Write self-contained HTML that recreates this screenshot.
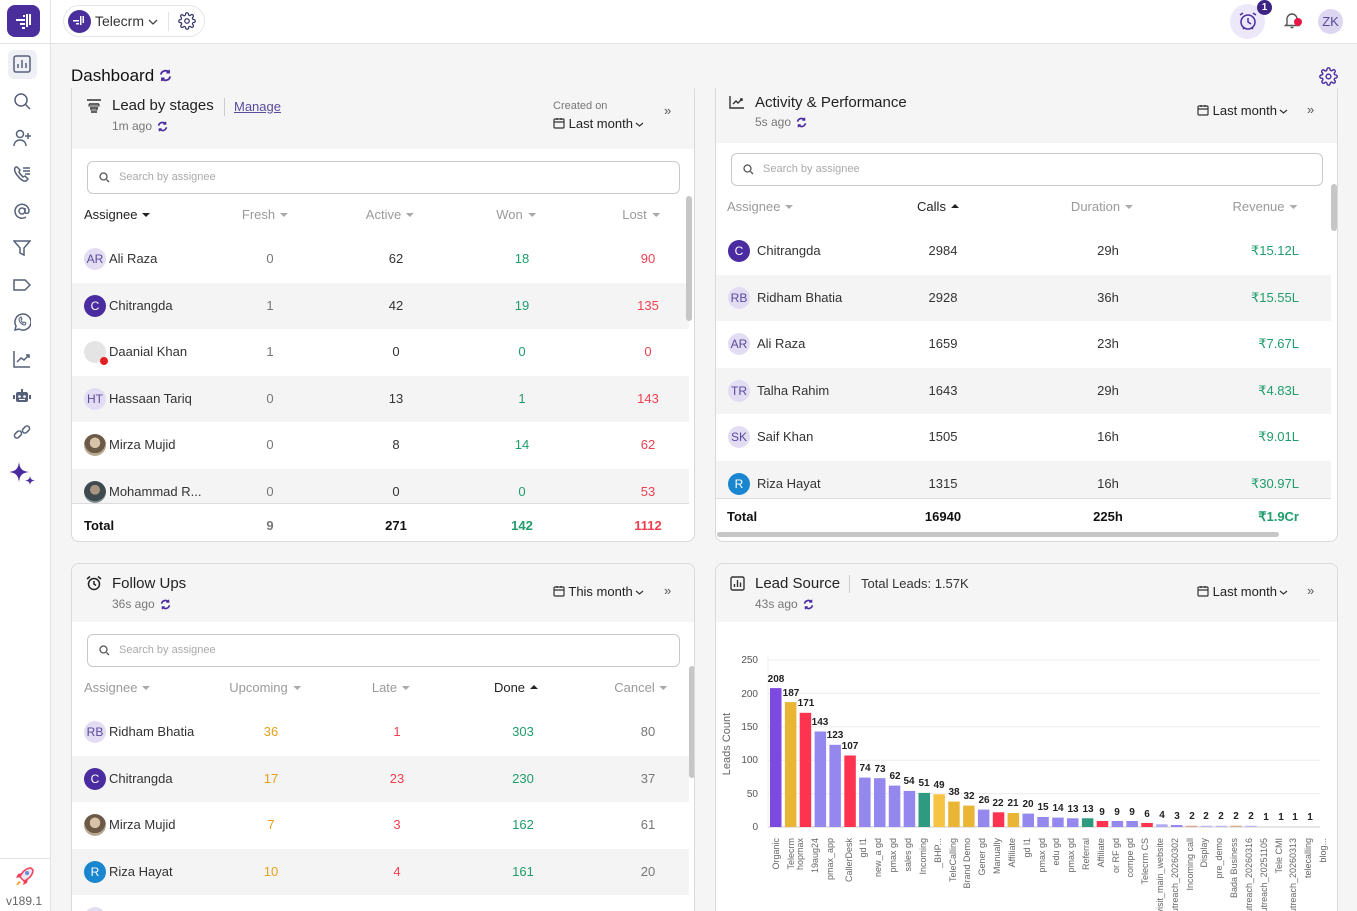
<!DOCTYPE html>
<html><head><meta charset="utf-8">
<style>
*{box-sizing:border-box;margin:0;padding:0}
html,body{width:1357px;height:911px;overflow:hidden}
body{background:#f5f5f5;font-family:"Liberation Sans",Arial,sans-serif;color:#222;position:relative}
.abs{position:absolute}
.side{position:absolute;left:0;top:0;width:51px;height:911px;background:#fff;border-right:1px solid #e3e3e3}
.top{position:absolute;left:51px;top:0;right:0;height:44px;background:#fff;border-bottom:1px solid #e3e3e3}
.ic{position:absolute;left:13px;width:18px;height:18px}
.card{position:absolute;background:#fff;border:1px solid #d9d9d9;border-radius:8px;overflow:hidden}
.hd{position:absolute;left:0;right:0;top:0;background:#f5f5f5}
.search{position:absolute;height:33px;border:1px solid #c9c9c9;border-radius:6px;background:#fff;font-size:11px;color:#aaa;padding-left:31px;line-height:31px}
.search svg{position:absolute;left:11px;top:10px}
.th{position:absolute;font-size:13px;color:#9a9a9a;transform:translateX(-50%);white-space:nowrap}
.th.l{transform:none}
.car{display:inline-block;width:0;height:0;border-left:4px solid transparent;border-right:4px solid transparent;border-top:4px solid #aaa;vertical-align:middle;margin-left:5px;margin-top:-2px}
.up{display:inline-block;width:0;height:0;border-left:4px solid transparent;border-right:4px solid transparent;border-bottom:4px solid #222;vertical-align:middle;margin-left:5px;margin-top:-3px}
.row{position:absolute;left:0;height:46.5px;font-size:13px}
.row.g{background:#f4f4f4}
.row span{position:absolute;top:0;line-height:46.5px;white-space:nowrap}
.c{transform:translateX(-50%)}
.av{position:absolute;top:12px;width:22px;height:22px;border-radius:50%;font-size:12px;text-align:center;line-height:22px}
.av.lt{background:#e3ddf3;color:#5a4a9c}
.av.dk{background:#4b2ca0;color:#fff}
.av.bl{background:#1a86d0;color:#fff}
.av.ph{background:radial-gradient(circle at 50% 40%,#d9c3a8 0 30%,#6b5a48 31% 60%,#b9a890 61%)}
.av.ph2{background:radial-gradient(circle at 50% 40%,#a89480 0 28%,#3f4a4f 29% 65%,#7d8a8c 66%)}
.gr{color:#777}.dkn{color:#333}.gn{color:#1f9d6a}.rd{color:#f0404f}.yl{color:#e3a21a}
.nm{color:#333}
.t1{position:absolute;font-size:15px;color:#222}
.t2{position:absolute;font-size:12px;color:#777}
.ref{display:inline-block;vertical-align:middle;margin-left:5px}
.dd{position:absolute;font-size:13px;color:#222;white-space:nowrap}
</style></head><body>

<div class="side">
  <div class="abs" style="left:7px;top:5px;width:33px;height:32px;background:#4a2e9c;border-radius:8px">
    <svg width="33" height="32" viewBox="0 0 33 32"><g fill="#fff"><rect x="9" y="14" width="9" height="2"/><rect x="13" y="18" width="5" height="2"/><rect x="15" y="22" width="3" height="2"/><rect x="19" y="9" width="2" height="13"/><rect x="22" y="9" width="2" height="11"/><rect x="16" y="10" width="2" height="2"/></g></svg>
  </div>
  <div class="abs" style="left:0;top:43px;width:51px;height:1px;background:#e3e3e3"></div>
  <div class="abs" style="left:8px;top:50px;width:29px;height:29px;background:#eef0f5;border-radius:6px"></div>
  <svg class="ic" style="top:55px" viewBox="0 0 18 18" fill="none" stroke="#55617a" stroke-width="1.5"><rect x="1" y="1" width="16" height="16" rx="2"/><path d="M5 13V9M9 13V5M13 13V8"/></svg>
  <svg class="ic" style="top:92px" viewBox="0 0 18 18" fill="none" stroke="#55617a" stroke-width="1.5"><circle cx="8" cy="8" r="6"/><path d="M12.5 12.5L17 17"/></svg>
  <svg class="ic" style="top:129px" viewBox="0 0 18 18" fill="none" stroke="#55617a" stroke-width="1.5"><circle cx="7" cy="5" r="3.5"/><path d="M1 17c0-4 3-6 6-6s6 2 6 6M15 4v6M12 7h6"/></svg>
  <svg class="ic" style="top:165px" viewBox="0 0 18 18" fill="none" stroke="#55617a" stroke-width="1.5"><path d="M3 2c-2 1-2 4 1 8s6 7 9 6l2-2-3-3-2 1c-1-1-3-3-4-5l1-2-3-3zM10 3h7M10 6h7M12 9h5"/></svg>
  <svg class="ic" style="top:202px" viewBox="0 0 18 18" fill="none" stroke="#55617a" stroke-width="1.5"><circle cx="9" cy="9" r="3"/><path d="M12 6v4c0 2 4 2 4-1a7 7 0 1 0-3 6"/></svg>
  <svg class="ic" style="top:239px" viewBox="0 0 18 18" fill="none" stroke="#55617a" stroke-width="1.5"><path d="M1 2h16l-6 7v7l-4-2V9z"/></svg>
  <svg class="ic" style="top:276px" viewBox="0 0 18 18" fill="none" stroke="#55617a" stroke-width="1.5"><path d="M1 4h11l5 5-5 5H1z"/></svg>
  <svg class="ic" style="top:313px" viewBox="0 0 18 18" fill="none" stroke="#55617a" stroke-width="1.5"><path d="M2 17l1-4a8 8 0 1 1 3 3z"/><path d="M6 6c0 3 3 6 6 6l1-2-2-1-1 1c-1-1-2-2-2-3l1-1-1-2z" stroke-width="1"/></svg>
  <svg class="ic" style="top:350px" viewBox="0 0 18 18" fill="none" stroke="#55617a" stroke-width="1.5"><path d="M1 1v16h16M4 12l4-4 3 2 5-5M13 5h3v3"/></svg>
  <svg class="ic" style="top:387px" viewBox="0 0 18 18" fill="#55617a"><rect x="3" y="5" width="12" height="10" rx="2"/><rect x="8" y="2" width="2" height="3"/><rect x="0" y="8" width="2" height="4"/><rect x="16" y="8" width="2" height="4"/><circle cx="6.5" cy="9.5" r="1.3" fill="#fff"/><circle cx="11.5" cy="9.5" r="1.3" fill="#fff"/><rect x="6" y="12" width="6" height="1" fill="#fff"/></svg>
  <svg class="ic" style="top:423px" viewBox="0 0 18 18" fill="none" stroke="#55617a" stroke-width="1.5"><rect x="1" y="9" width="8" height="5" rx="2.5" transform="rotate(-45 5 11.5)"/><rect x="9" y="4" width="8" height="5" rx="2.5" transform="rotate(-45 13 6.5)"/></svg>
  <svg class="abs" style="left:9px;top:462px" width="28" height="26" viewBox="0 0 28 26" fill="#4b2ca0"><path d="M10 0C11 7 13 9 20 10C13 11 11 13 10 20C9 13 7 11 0 10C7 9 9 7 10 0Z"/><path d="M21 14C21.5 17 22.5 18 26 18.5C22.5 19 21.5 20 21 23C20.5 20 19.5 19 16 18.5C19.5 18 20.5 17 21 14Z"/></svg>
  <div class="abs" style="left:0;top:858px;width:51px;height:1px;background:#e3e3e3"></div>
  <svg class="abs" style="left:13px;top:866px" width="22" height="22" viewBox="0 0 22 22"><path d="M18 2c-5 0-9 4-11 9l4 4c5-2 9-6 9-11z" fill="#e8e4f0" stroke="#f0405a" stroke-width="1.5"/><circle cx="14" cy="7" r="2" fill="#6b8ae0"/><path d="M7 11l-4 1 2-4 4-1zM11 15l-1 4 4-2 1-4z" fill="#f0405a"/><path d="M6 15l-3 4 2 0 3-3z" fill="#ffa030"/></svg>
  <div class="abs" style="left:6px;top:894px;font-size:12px;color:#666">v189.1</div>
</div>

<div class="top">
  <div class="abs" style="left:12px;top:5px;width:142px;height:32px;border:1px solid #e6e6e6;border-radius:16px;background:#fff">
    <div class="abs" style="left:4px;top:4px;width:23px;height:23px;border-radius:50%;background:#4a2e9c"></div>
    <svg class="abs" style="left:4px;top:4px" width="23" height="23" viewBox="0 0 23 23" fill="#fff"><rect x="5" y="10" width="6" height="1.5"/><rect x="8" y="13" width="3" height="1.5"/><rect x="12" y="6" width="1.5" height="9"/><rect x="14.5" y="6" width="1.5" height="7"/></svg>
    <div class="abs" style="left:31px;top:7px;font-size:14px;color:#333">Telecrm</div>
    <svg class="abs" style="left:84px;top:12px" width="10" height="8" viewBox="0 0 10 8" fill="none" stroke="#444" stroke-width="1.3"><path d="M1 2l4 4 4-4"/></svg>
    <div class="abs" style="left:104px;top:6px;width:1px;height:19px;background:#e3e3e3"></div>
    <svg class="abs" style="left:114px;top:6px" width="18" height="18" viewBox="0 0 24 24" fill="none" stroke="#3a3a6a" stroke-width="1.7"><circle cx="12" cy="12" r="3"/><path d="M19.4 15a1.6 1.6 0 0 0 .3 1.8l.1.1a2 2 0 1 1-2.8 2.8l-.1-.1a1.6 1.6 0 0 0-1.8-.3 1.6 1.6 0 0 0-1 1.5V21a2 2 0 1 1-4 0v-.1a1.6 1.6 0 0 0-1-1.5 1.6 1.6 0 0 0-1.8.3l-.1.1a2 2 0 1 1-2.8-2.8l.1-.1a1.6 1.6 0 0 0 .3-1.8 1.6 1.6 0 0 0-1.5-1H3a2 2 0 1 1 0-4h.1a1.6 1.6 0 0 0 1.5-1 1.6 1.6 0 0 0-.3-1.8l-.1-.1a2 2 0 1 1 2.8-2.8l.1.1a1.6 1.6 0 0 0 1.8.3H9a1.6 1.6 0 0 0 1-1.5V3a2 2 0 1 1 4 0v.1a1.6 1.6 0 0 0 1 1.5 1.6 1.6 0 0 0 1.8-.3l.1-.1a2 2 0 1 1 2.8 2.8l-.1.1a1.6 1.6 0 0 0-.3 1.8V9a1.6 1.6 0 0 0 1.5 1H21a2 2 0 1 1 0 4h-.1a1.6 1.6 0 0 0-1.5 1z"/></svg>
  </div>
  <div class="abs" style="left:1179px;top:4px;width:35px;height:35px;border-radius:50%;background:#ece8fa"></div>
  <svg class="abs" style="left:1187px;top:11px" width="20" height="20" viewBox="0 0 20 20" fill="none" stroke="#4b2ca0" stroke-width="1.5"><circle cx="10" cy="11" r="7"/><path d="M10 7v4l3 2M2 4l3-2M18 4l-3-2M5 18l1-1M15 18l-1-1"/></svg>
  <div class="abs" style="left:1206px;top:0;width:15px;height:15px;border-radius:50%;background:#3c2384;color:#fff;font-size:10px;font-weight:bold;text-align:center;line-height:15px">1</div>
  <svg class="abs" style="left:1232px;top:11px" width="18" height="18" viewBox="0 0 18 18" fill="none" stroke="#555" stroke-width="1.4"><path d="M4 13V8a5 5 0 0 1 10 0v5l1.5 1.5h-13zM7.5 16.5h3"/></svg>
  <div class="abs" style="left:1243px;top:18px;width:8px;height:8px;border-radius:50%;background:#e8174a"></div>
  <div class="abs" style="left:1267px;top:9px;width:25px;height:25px;border-radius:50%;background:#ddd6f0;color:#5a4a9c;font-size:13px;text-align:center;line-height:25px">ZK</div>
</div>

<div class="abs" style="left:71px;top:66px;font-size:17px;color:#111">Dashboard<svg class="ref" style="margin-top:-3px" width="13" height="13" viewBox="0 0 14 14" fill="none" stroke="#4b2ca0" stroke-width="2"><path d="M2 6a5 5 0 0 1 9-2M12 8a5 5 0 0 1-9 2"/><path d="M11 1v3H8M3 13v-3h3" stroke-width="1.6"/></svg></div>
<svg class="abs" style="left:1319px;top:67px" width="19" height="19" viewBox="0 0 24 24" fill="none" stroke="#4b2ca0" stroke-width="1.8"><circle cx="12" cy="12" r="3"/><path d="M19.4 15a1.6 1.6 0 0 0 .3 1.8l.1.1a2 2 0 1 1-2.8 2.8l-.1-.1a1.6 1.6 0 0 0-1.8-.3 1.6 1.6 0 0 0-1 1.5V21a2 2 0 1 1-4 0v-.1a1.6 1.6 0 0 0-1-1.5 1.6 1.6 0 0 0-1.8.3l-.1.1a2 2 0 1 1-2.8-2.8l.1-.1a1.6 1.6 0 0 0 .3-1.8 1.6 1.6 0 0 0-1.5-1H3a2 2 0 1 1 0-4h.1a1.6 1.6 0 0 0 1.5-1 1.6 1.6 0 0 0-.3-1.8l-.1-.1a2 2 0 1 1 2.8-2.8l.1.1a1.6 1.6 0 0 0 1.8.3H9a1.6 1.6 0 0 0 1-1.5V3a2 2 0 1 1 4 0v.1a1.6 1.6 0 0 0 1 1.5 1.6 1.6 0 0 0 1.8-.3l.1-.1a2 2 0 1 1 2.8 2.8l-.1.1a1.6 1.6 0 0 0-.3 1.8V9a1.6 1.6 0 0 0 1.5 1H21a2 2 0 1 1 0 4h-.1a1.6 1.6 0 0 0-1.5 1z"/></svg>

<div class="abs" style="left:0;top:88px;width:1357px;height:460px;overflow:hidden">

<div class="card" style="left:71px;top:-6px;width:624px;height:460px">
  <div class="hd" style="height:66px"></div>
  <svg class="abs" style="left:14px;top:15px" width="16" height="16" viewBox="0 0 16 16" fill="none" stroke="#333" stroke-width="1.4"><path d="M1 2h14M3 6h10M4 10h8M5 14h6"/><path d="M3 6v2h10V6M5 10v2h6v-2" stroke-width="1"/></svg>
  <div class="t1" style="left:40px;top:14px">Lead by stages</div>
  <div class="abs" style="left:152px;top:15px;width:1px;height:18px;background:#ccc"></div>
  <div class="abs" style="left:162px;top:16px;font-size:13px;color:#5a4a9c;text-decoration:underline">Manage</div>
  <div class="t2" style="left:40px;top:36px">1m ago<svg class="ref" width="11" height="11" viewBox="0 0 14 14" fill="none" stroke="#4b2ca0" stroke-width="2"><path d="M2 6a5 5 0 0 1 9-2M12 8a5 5 0 0 1-9 2"/><path d="M11 1v3H8M3 13v-3h3" stroke-width="1.6"/></svg></div>
  <div class="abs" style="left:481px;top:17px;font-size:11px;color:#777">Created on</div>
  <div class="dd" style="left:481px;top:33px"><svg width="12" height="12" viewBox="0 0 12 12" fill="none" stroke="#333" stroke-width="1.2" style="vertical-align:-1px"><rect x="1" y="2" width="10" height="9" rx="1"/><path d="M1 5h10M4 1v2M8 1v2"/></svg> Last month<svg width="9" height="7" viewBox="0 0 9 7" fill="none" stroke="#333" stroke-width="1.2" style="margin-left:2px"><path d="M1 2l3.5 3 3.5-3"/></svg></div>
  <div class="abs" style="left:592px;top:20px;font-size:13px;color:#555">»</div>
  <div class="search" style="left:15px;top:78px;width:593px"><svg width="11" height="11" viewBox="0 0 11 11" fill="none" stroke="#555" stroke-width="1.3"><circle cx="4.5" cy="4.5" r="3.5"/><path d="M7.5 7.5L10 10"/></svg>Search by assignee</div>
  <div class="th l" style="left:12px;top:124px;color:#222">Assignee<span class="car" style="border-top-color:#222"></span></div>
  <div class="th" style="left:193px;top:124px">Fresh<span class="car"></span></div>
  <div class="th" style="left:318px;top:124px">Active<span class="car"></span></div>
  <div class="th" style="left:444px;top:124px">Won<span class="car"></span></div>
  <div class="th" style="left:569px;top:124px">Lost<span class="car"></span></div>
  <div class="abs" style="left:0;top:153px;width:617px;height:267px;overflow:hidden">
    <div class="row" style="top:0;width:617px"><div class="av lt" style="left:12px">AR</div><span class="nm" style="left:37px">Ali Raza</span><span class="c gr" style="left:198px">0</span><span class="c dkn" style="left:324px">62</span><span class="c gn" style="left:450px">18</span><span class="c rd" style="left:576px">90</span></div>
    <div class="row g" style="top:46.5px;width:617px"><div class="av dk" style="left:12px">C</div><span class="nm" style="left:37px">Chitrangda</span><span class="c gr" style="left:198px">1</span><span class="c dkn" style="left:324px">42</span><span class="c gn" style="left:450px">19</span><span class="c rd" style="left:576px">135</span></div>
    <div class="row" style="top:93px;width:617px"><div class="av" style="left:12px;background:#e4e4e4"></div><div class="abs" style="left:28px;top:28px;width:8px;height:8px;border-radius:50%;background:#e32020"></div><span class="nm" style="left:37px">Daanial Khan</span><span class="c gr" style="left:198px">1</span><span class="c dkn" style="left:324px">0</span><span class="c gn" style="left:450px">0</span><span class="c rd" style="left:576px">0</span></div>
    <div class="row g" style="top:139.5px;width:617px"><div class="av lt" style="left:12px">HT</div><span class="nm" style="left:37px">Hassaan Tariq</span><span class="c gr" style="left:198px">0</span><span class="c dkn" style="left:324px">13</span><span class="c gn" style="left:450px">1</span><span class="c rd" style="left:576px">143</span></div>
    <div class="row" style="top:186px;width:617px"><div class="av ph" style="left:12px"></div><span class="nm" style="left:37px">Mirza Mujid</span><span class="c gr" style="left:198px">0</span><span class="c dkn" style="left:324px">8</span><span class="c gn" style="left:450px">14</span><span class="c rd" style="left:576px">62</span></div>
    <div class="row g" style="top:232.5px;width:617px"><div class="av ph2" style="left:12px"></div><span class="nm" style="left:37px">Mohammad R...</span><span class="c gr" style="left:198px">0</span><span class="c dkn" style="left:324px">0</span><span class="c gn" style="left:450px">0</span><span class="c rd" style="left:576px">53</span></div>
  </div>
  <div class="abs" style="left:614px;top:113px;width:6px;height:125px;background:#c6c6c6;border-radius:3px"></div>
  <div class="abs" style="left:0;top:420px;width:617px;height:1px;background:#ddd"></div>
  <div class="row" style="top:420px;width:617px;font-weight:bold"><span style="left:12px;color:#111">Total</span><span class="c gr" style="left:198px">9</span><span class="c" style="left:324px;color:#111">271</span><span class="c gn" style="left:450px">142</span><span class="c rd" style="left:576px">1112</span></div>
</div>

<div class="card" style="left:715px;top:-6px;width:623px;height:460px">
  <div class="hd" style="height:60px"></div>
  <svg class="abs" style="left:13px;top:12px" width="16" height="14" viewBox="0 0 16 14" fill="none" stroke="#333" stroke-width="1.4"><path d="M1 1v12h14M4 9l3-3 2 2 4-4M11 4h2v2"/></svg>
  <div class="t1" style="left:39px;top:11px">Activity &amp; Performance</div>
  <div class="t2" style="left:39px;top:32px">5s ago<svg class="ref" width="11" height="11" viewBox="0 0 14 14" fill="none" stroke="#4b2ca0" stroke-width="2"><path d="M2 6a5 5 0 0 1 9-2M12 8a5 5 0 0 1-9 2"/><path d="M11 1v3H8M3 13v-3h3" stroke-width="1.6"/></svg></div>
  <div class="dd" style="left:481px;top:20px"><svg width="12" height="12" viewBox="0 0 12 12" fill="none" stroke="#333" stroke-width="1.2" style="vertical-align:-1px"><rect x="1" y="2" width="10" height="9" rx="1"/><path d="M1 5h10M4 1v2M8 1v2"/></svg> Last month<svg width="9" height="7" viewBox="0 0 9 7" fill="none" stroke="#333" stroke-width="1.2" style="margin-left:2px"><path d="M1 2l3.5 3 3.5-3"/></svg></div>
  <div class="abs" style="left:591px;top:19px;font-size:13px;color:#555">»</div>
  <div class="search" style="left:15px;top:70px;width:592px"><svg width="11" height="11" viewBox="0 0 11 11" fill="none" stroke="#555" stroke-width="1.3"><circle cx="4.5" cy="4.5" r="3.5"/><path d="M7.5 7.5L10 10"/></svg>Search by assignee</div>
  <div class="th l" style="left:11px;top:116px">Assignee<span class="car"></span></div>
  <div class="th" style="left:222px;top:116px;color:#222">Calls<span class="up"></span></div>
  <div class="th" style="left:386px;top:116px">Duration<span class="car"></span></div>
  <div class="th" style="left:549px;top:116px">Revenue<span class="car"></span></div>
  <div class="abs" style="left:0;top:145px;width:615px;height:270px;overflow:hidden">
    <div class="row" style="top:0;width:615px"><div class="av dk" style="left:12px">C</div><span class="nm" style="left:41px">Chitrangda</span><span class="c dkn" style="left:227px">2984</span><span class="c dkn" style="left:392px">29h</span><span class="gn" style="right:32px">₹15.12L</span></div>
    <div class="row g" style="top:46.5px;width:615px"><div class="av lt" style="left:12px">RB</div><span class="nm" style="left:41px">Ridham Bhatia</span><span class="c dkn" style="left:227px">2928</span><span class="c dkn" style="left:392px">36h</span><span class="gn" style="right:32px">₹15.55L</span></div>
    <div class="row" style="top:93px;width:615px"><div class="av lt" style="left:12px">AR</div><span class="nm" style="left:41px">Ali Raza</span><span class="c dkn" style="left:227px">1659</span><span class="c dkn" style="left:392px">23h</span><span class="gn" style="right:32px">₹7.67L</span></div>
    <div class="row g" style="top:139.5px;width:615px"><div class="av lt" style="left:12px">TR</div><span class="nm" style="left:41px">Talha Rahim</span><span class="c dkn" style="left:227px">1643</span><span class="c dkn" style="left:392px">29h</span><span class="gn" style="right:32px">₹4.83L</span></div>
    <div class="row" style="top:186px;width:615px"><div class="av lt" style="left:12px">SK</div><span class="nm" style="left:41px">Saif Khan</span><span class="c dkn" style="left:227px">1505</span><span class="c dkn" style="left:392px">16h</span><span class="gn" style="right:32px">₹9.01L</span></div>
    <div class="row g" style="top:232.5px;width:615px"><div class="av bl" style="left:12px">R</div><span class="nm" style="left:41px">Riza Hayat</span><span class="c dkn" style="left:227px">1315</span><span class="c dkn" style="left:392px">16h</span><span class="gn" style="right:32px">₹30.97L</span></div>
  </div>
  <div class="abs" style="left:615px;top:101px;width:6px;height:47px;background:#c6c6c6;border-radius:3px"></div>
  <div class="abs" style="left:0;top:415px;width:615px;height:1px;background:#ddd"></div>
  <div class="row" style="top:411px;width:615px;font-weight:bold"><span style="left:11px;color:#111">Total</span><span class="c" style="left:227px;color:#111">16940</span><span class="c" style="left:392px;color:#111">225h</span><span class="gn" style="right:32px">₹1.9Cr</span></div>
  <div class="abs" style="left:1px;top:449px;width:562px;height:5px;background:#c6c6c6;border-radius:3px"></div>
</div>
</div>

<div class="abs" style="left:0;top:563px;width:1357px;height:348px;overflow:hidden">
<div class="card" style="left:71px;top:0;width:624px;height:420px">
  <div class="hd" style="height:58px"></div>
  <svg class="abs" style="left:14px;top:11px" width="16" height="16" viewBox="0 0 16 16" fill="none" stroke="#222" stroke-width="1.5"><circle cx="8" cy="9" r="5.5"/><path d="M8 6v3l2 1.5M1 4l3-2.5M15 4l-3-2.5"/></svg>
  <div class="t1" style="left:40px;top:11px">Follow Ups</div>
  <div class="t2" style="left:40px;top:33px">36s ago<svg class="ref" width="11" height="11" viewBox="0 0 14 14" fill="none" stroke="#4b2ca0" stroke-width="2"><path d="M2 6a5 5 0 0 1 9-2M12 8a5 5 0 0 1-9 2"/><path d="M11 1v3H8M3 13v-3h3" stroke-width="1.6"/></svg></div>
  <div class="dd" style="left:481px;top:20px"><svg width="12" height="12" viewBox="0 0 12 12" fill="none" stroke="#333" stroke-width="1.2" style="vertical-align:-1px"><rect x="1" y="2" width="10" height="9" rx="1"/><path d="M1 5h10M4 1v2M8 1v2"/></svg> This month<svg width="9" height="7" viewBox="0 0 9 7" fill="none" stroke="#333" stroke-width="1.2" style="margin-left:2px"><path d="M1 2l3.5 3 3.5-3"/></svg></div>
  <div class="abs" style="left:592px;top:19px;font-size:13px;color:#555">»</div>
  <div class="search" style="left:15px;top:70px;width:593px"><svg width="11" height="11" viewBox="0 0 11 11" fill="none" stroke="#555" stroke-width="1.3"><circle cx="4.5" cy="4.5" r="3.5"/><path d="M7.5 7.5L10 10"/></svg>Search by assignee</div>
  <div class="th l" style="left:12px;top:116px">Assignee<span class="car"></span></div>
  <div class="th" style="left:193px;top:116px">Upcoming<span class="car"></span></div>
  <div class="th" style="left:319px;top:116px">Late<span class="car"></span></div>
  <div class="th" style="left:444px;top:116px;color:#222">Done<span class="up"></span></div>
  <div class="th" style="left:569px;top:116px">Cancel<span class="car"></span></div>
  <div class="row" style="top:145px;width:617px"><div class="av lt" style="left:12px">RB</div><span class="nm" style="left:37px">Ridham Bhatia</span><span class="c yl" style="left:199px">36</span><span class="c rd" style="left:325px">1</span><span class="c gn" style="left:451px">303</span><span class="c gr" style="left:576px">80</span></div>
  <div class="row g" style="top:191.5px;width:617px"><div class="av dk" style="left:12px">C</div><span class="nm" style="left:37px">Chitrangda</span><span class="c yl" style="left:199px">17</span><span class="c rd" style="left:325px">23</span><span class="c gn" style="left:451px">230</span><span class="c gr" style="left:576px">37</span></div>
  <div class="row" style="top:238px;width:617px"><div class="av ph" style="left:12px"></div><span class="nm" style="left:37px">Mirza Mujid</span><span class="c yl" style="left:199px">7</span><span class="c rd" style="left:325px">3</span><span class="c gn" style="left:451px">162</span><span class="c gr" style="left:576px">61</span></div>
  <div class="row g" style="top:284.5px;width:617px"><div class="av bl" style="left:12px">R</div><span class="nm" style="left:37px">Riza Hayat</span><span class="c yl" style="left:199px">10</span><span class="c rd" style="left:325px">4</span><span class="c gn" style="left:451px">161</span><span class="c gr" style="left:576px">20</span></div>
  <div class="av lt" style="left:12px;top:343px"></div>
  <div class="abs" style="left:617px;top:102px;width:6px;height:112px;background:#c6c6c6;border-radius:3px"></div>
</div>

<div class="card" style="left:715px;top:0;width:623px;height:420px">
  <div class="hd" style="height:58px"></div>
  <svg class="abs" style="left:14px;top:12px" width="15" height="15" viewBox="0 0 15 15" fill="none" stroke="#333" stroke-width="1.4"><rect x="1" y="1" width="13" height="13" rx="1.5"/><path d="M4.5 11V8M7.5 11V4M10.5 11V6.5"/></svg>
  <div class="t1" style="left:39px;top:11px">Lead Source</div>
  <div class="abs" style="left:133px;top:11px;width:1px;height:18px;background:#ccc"></div>
  <div class="abs" style="left:145px;top:12px;font-size:13px;color:#333">Total Leads: 1.57K</div>
  <div class="t2" style="left:39px;top:33px">43s ago<svg class="ref" width="11" height="11" viewBox="0 0 14 14" fill="none" stroke="#4b2ca0" stroke-width="2"><path d="M2 6a5 5 0 0 1 9-2M12 8a5 5 0 0 1-9 2"/><path d="M11 1v3H8M3 13v-3h3" stroke-width="1.6"/></svg></div>
  <div class="dd" style="left:481px;top:20px"><svg width="12" height="12" viewBox="0 0 12 12" fill="none" stroke="#333" stroke-width="1.2" style="vertical-align:-1px"><rect x="1" y="2" width="10" height="9" rx="1"/><path d="M1 5h10M4 1v2M8 1v2"/></svg> Last month<svg width="9" height="7" viewBox="0 0 9 7" fill="none" stroke="#333" stroke-width="1.2" style="margin-left:2px"><path d="M1 2l3.5 3 3.5-3"/></svg></div>
  <div class="abs" style="left:591px;top:19px;font-size:13px;color:#555">»</div>
</div>
</div>

<svg class="abs" style="left:0;top:0" width="1357" height="911" viewBox="0 0 1357 911" font-family="Liberation Sans, Arial, sans-serif">
  <g stroke="#ececec" stroke-width="1">
    <path d="M768 660H1320M768 693.4H1320M768 726.8H1320M768 760.2H1320M768 793.6H1320"/>
  </g>
  <path d="M768 827H1320" stroke="#ccc"/>
  <path d="M768 655V827" stroke="#eee"/>
  <g font-size="10" fill="#555" text-anchor="end">
    <text x="758" y="663">250</text><text x="758" y="697">200</text><text x="758" y="730">150</text><text x="758" y="763">100</text><text x="758" y="797">50</text><text x="758" y="830">0</text>
  </g>
  <text x="730" y="744" font-size="11" fill="#666" text-anchor="middle" transform="rotate(-90 730 744)">Leads Count</text>
  <g>
    <rect x="770" y="688.1" width="11.5" height="138.9" fill="#7c4ae0"/>
    <rect x="784.9" y="702.1" width="11.5" height="124.9" fill="#e8b535"/>
    <rect x="799.7" y="712.8" width="11.5" height="114.2" fill="#fe3350"/>
    <rect x="814.6" y="731.5" width="11.5" height="95.5" fill="#9488ee"/>
    <rect x="829.4" y="744.8" width="11.5" height="82.2" fill="#9488ee"/>
    <rect x="844.3" y="755.5" width="11.5" height="71.5" fill="#fe3350"/>
    <rect x="859.1" y="777.6" width="11.5" height="49.4" fill="#9488ee"/>
    <rect x="874" y="778.2" width="11.5" height="48.8" fill="#9488ee"/>
    <rect x="888.8" y="785.6" width="11.5" height="41.4" fill="#9488ee"/>
    <rect x="903.7" y="790.9" width="11.5" height="36.1" fill="#9488ee"/>
    <rect x="918.5" y="792.9" width="11.5" height="34.1" fill="#2e9a80"/>
    <rect x="933.4" y="794.3" width="11.5" height="32.7" fill="#f6c342"/>
    <rect x="948.2" y="801.6" width="11.5" height="25.4" fill="#e8b535"/>
    <rect x="963.1" y="805.6" width="11.5" height="21.4" fill="#e8b535"/>
    <rect x="977.9" y="809.6" width="11.5" height="17.4" fill="#9488ee"/>
    <rect x="992.8" y="812.3" width="11.5" height="14.7" fill="#fe3350"/>
    <rect x="1007.6" y="813" width="11.5" height="14" fill="#e8b535"/>
    <rect x="1022.5" y="813.6" width="11.5" height="13.4" fill="#9488ee"/>
    <rect x="1037.3" y="817" width="11.5" height="10" fill="#9488ee"/>
    <rect x="1052.2" y="817.6" width="11.5" height="9.4" fill="#9488ee"/>
    <rect x="1067" y="818.3" width="11.5" height="8.7" fill="#9488ee"/>
    <rect x="1081.9" y="818.3" width="11.5" height="8.7" fill="#2e9a80"/>
    <rect x="1096.7" y="821" width="11.5" height="6" fill="#fe3350"/>
    <rect x="1111.6" y="821" width="11.5" height="6" fill="#9488ee"/>
    <rect x="1126.4" y="821" width="11.5" height="6" fill="#9488ee"/>
    <rect x="1141.3" y="823" width="11.5" height="4" fill="#fe3350"/>
    <rect x="1156.1" y="824.3" width="11.5" height="2.7" fill="#b0a8f0"/>
    <rect x="1171" y="825" width="11.5" height="2" fill="#9488ee"/>
    <rect x="1185.8" y="825.7" width="11.5" height="1.3" fill="#d8aa90"/>
    <rect x="1200.7" y="825.7" width="11.5" height="1.3" fill="#c0b8f4"/>
    <rect x="1215.5" y="825.7" width="11.5" height="1.3" fill="#c0b8f4"/>
    <rect x="1230.4" y="825.7" width="11.5" height="1.3" fill="#d8aa90"/>
    <rect x="1245.2" y="825.7" width="11.5" height="1.3" fill="#c0b8f4"/>
  </g>
  <g font-size="10" fill="#222" text-anchor="middle" font-weight="bold">
    <text x="776" y="682">208</text><text x="791" y="696">187</text><text x="806" y="706">171</text><text x="820" y="725">143</text><text x="835" y="738">123</text><text x="850" y="749">107</text><text x="865" y="771">74</text><text x="880" y="772">73</text><text x="895" y="779">62</text><text x="909" y="784">54</text><text x="924" y="786">51</text><text x="939" y="788">49</text><text x="954" y="795">38</text><text x="969" y="799">32</text><text x="984" y="803">26</text><text x="998" y="806">22</text><text x="1013" y="806">21</text><text x="1028" y="807">20</text><text x="1043" y="810">15</text><text x="1058" y="811">14</text><text x="1073" y="812">13</text><text x="1088" y="812">13</text><text x="1102" y="815">9</text><text x="1117" y="815">9</text><text x="1132" y="815">9</text><text x="1147" y="817">6</text><text x="1162" y="818">4</text><text x="1177" y="819">3</text><text x="1192" y="819">2</text><text x="1206" y="819">2</text><text x="1221" y="819">2</text><text x="1236" y="819">2</text><text x="1251" y="819">2</text><text x="1266" y="820">1</text><text x="1281" y="820">1</text><text x="1295" y="820">1</text><text x="1310" y="820">1</text>
  </g>
  <g font-size="9" fill="#666" text-anchor="end">
    <text transform="translate(779 838) rotate(-90)">Organic</text>
    <text transform="translate(794 838) rotate(-90)">Telecrm</text>
    <text transform="translate(803 838) rotate(-90)">hopmax</text>
    <text transform="translate(818 838) rotate(-90)">19aug24</text>
    <text transform="translate(833 838) rotate(-90)">pmax_app</text>
    <text transform="translate(852 838) rotate(-90)">CallerDesk</text>
    <text transform="translate(866 838) rotate(-90)">gd l1</text>
    <text transform="translate(881 838) rotate(-90)">new_a gd</text>
    <text transform="translate(896 838) rotate(-90)">pmax gd</text>
    <text transform="translate(911 838) rotate(-90)">sales gd</text>
    <text transform="translate(926 838) rotate(-90)">Incoming</text>
    <text transform="translate(941 838) rotate(-90)">_BHP...</text>
    <text transform="translate(956 838) rotate(-90)">TeleCalling</text>
    <text transform="translate(970 838) rotate(-90)">Brand Demo</text>
    <text transform="translate(985 838) rotate(-90)">Gener gd</text>
    <text transform="translate(1000 838) rotate(-90)">Manually</text>
    <text transform="translate(1015 838) rotate(-90)">Affiliate</text>
    <text transform="translate(1030 838) rotate(-90)">gd l1</text>
    <text transform="translate(1045 838) rotate(-90)">pmax gd</text>
    <text transform="translate(1059 838) rotate(-90)">edu gd</text>
    <text transform="translate(1074 838) rotate(-90)">pmax gd</text>
    <text transform="translate(1089 838) rotate(-90)">Referral</text>
    <text transform="translate(1104 838) rotate(-90)">Affiliate</text>
    <text transform="translate(1119 838) rotate(-90)">or RF gd</text>
    <text transform="translate(1133 838) rotate(-90)">compe gd</text>
    <text transform="translate(1148 838) rotate(-90)">Telecrm CS</text>
    <text transform="translate(1163 838) rotate(-90)">visit_main_website</text>
    <text transform="translate(1178 838) rotate(-90)">outreach_20260302</text>
    <text transform="translate(1193 838) rotate(-90)">Incoming call</text>
    <text transform="translate(1207 838) rotate(-90)">Display</text>
    <text transform="translate(1222 838) rotate(-90)">pre_demo</text>
    <text transform="translate(1237 838) rotate(-90)">Bada Business</text>
    <text transform="translate(1252 838) rotate(-90)">outreach_20260316</text>
    <text transform="translate(1267 838) rotate(-90)">outreach_20251105</text>
    <text transform="translate(1282 838) rotate(-90)">Tele CMI</text>
    <text transform="translate(1296 838) rotate(-90)">outreach_20260313</text>
    <text transform="translate(1311 838) rotate(-90)">telecalling</text>
    <text transform="translate(1326 838) rotate(-90)">blog...</text>
  </g>
</svg>
</body></html>
